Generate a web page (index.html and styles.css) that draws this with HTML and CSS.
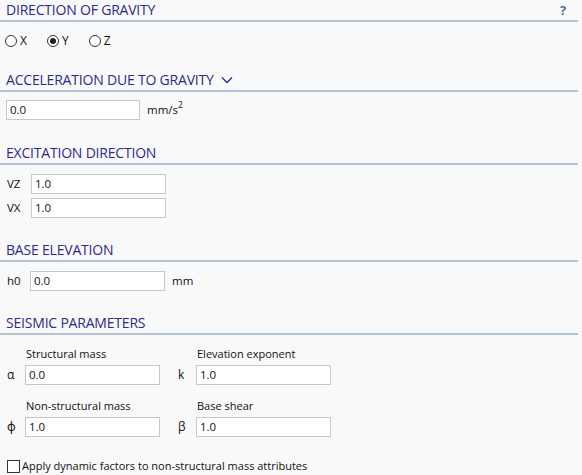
FILE: index.html
```html
<!DOCTYPE html>
<html>
<head>
<meta charset="utf-8">
<link rel="stylesheet" href="styles.css">
</head>
<body>
<div class="panel">
  <div class="heading">
    <span>DIRECTION OF GRAVITY</span>
    <span class="help">?</span>
  </div>
  <div class="radios">
    <label class="radio"><span class="circle"></span>X</label>
    <label class="radio"><span class="circle on"></span>Y</label>
    <label class="radio"><span class="circle"></span>Z</label>
  </div>

  <div class="heading h-accel">
    <span>ACCELERATION DUE TO GRAVITY</span>
    <svg class="chev" width="12" height="8" viewBox="0 0 12 8"><path d="M1 1.5 L6 6.5 L11 1.5" fill="none" stroke="#2e2a8e" stroke-width="1.4"/></svg>
  </div>
  <div class="row accel">
    <div class="input w134">0.0</div>
    <span class="unit">mm/s<sup>2</sup></span>
  </div>

  <div class="heading h-exc">
    <span>EXCITATION DIRECTION</span>
  </div>
  <div class="rows">
    <div class="row"><span class="lbl">VZ</span><div class="input w135">1.0</div></div>
    <div class="row"><span class="lbl">VX</span><div class="input w135">1.0</div></div>
  </div>

  <div class="heading h-base">
    <span>BASE ELEVATION</span>
  </div>
  <div class="rows">
    <div class="row"><span class="lbl h0">h0</span><div class="input w135">0.0</div><span class="unit mm">mm</span></div>
  </div>

  <div class="heading h-seis">
    <span>SEISMIC PARAMETERS</span>
  </div>
  <div class="grid">
    <div class="cell">
      <div class="cap">Structural mass</div>
      <div class="row"><span class="sym">α</span><div class="input w135">0.0</div></div>
    </div>
    <div class="cell">
      <div class="cap">Elevation exponent</div>
      <div class="row"><span class="sym">k</span><div class="input w135">1.0</div></div>
    </div>
    <div class="cell">
      <div class="cap">Non-structural mass</div>
      <div class="row"><span class="sym">ϕ</span><div class="input w135">1.0</div></div>
    </div>
    <div class="cell">
      <div class="cap">Base shear</div>
      <div class="row"><span class="sym">β</span><div class="input w135">1.0</div></div>
    </div>
  </div>

  <label class="check"><span class="box"></span>Apply dynamic factors to non-structural mass attributes</label>
</div>
</body>
</html>
```
FILE: styles.css
```css
html, body {
  margin: 0;
  padding: 0;
  background: #f9f9f9;
}
body {
  font-family: "Open Sans", "Noto Sans", sans-serif;
  font-size: 11px;
  line-height: 16px;
  color: #111;
  width: 582px;
  height: 475px;
  overflow: hidden;
}
.panel {
  width: 578px;
}
.heading {
  display: flex;
  align-items: center;
  height: 20px;
  padding-left: 6px;
  border-bottom: 2px solid #b6c4d8;
  color: #2d2a8c;
  font-size: 14px;
  line-height: 18px;
  letter-spacing: -0.2px;
}
.h-accel { margin-top: 21px; }
.h-exc { margin-top: 23px; }
.h-base { margin-top: 22px; }
.h-seis { margin-top: 22px; }
.help {
  margin-left: auto;
  margin-right: 12px;
  color: #4d6f9e;
  font-weight: bold;
  font-size: 13px;
}
.chev {
  margin-left: 7px;
}
.radios {
  display: flex;
  margin-top: 11px;
  height: 16px;
  align-items: center;
  padding-left: 5px;
  font-size: 12px;
}
.radio {
  display: flex;
  align-items: center;
  margin-right: 20px;
}
.circle {
  width: 10px;
  height: 10px;
  border: 1px solid #333;
  border-radius: 50%;
  margin-right: 3px;
  display: flex;
  align-items: center;
  justify-content: center;
  background: #fff;
}
.circle.on::after {
  content: "";
  width: 6px;
  height: 6px;
  border-radius: 50%;
  background: #222;
}
.row {
  display: flex;
  align-items: center;
}
.accel {
  margin-top: 8px;
  padding-left: 6px;
}
.input {
  box-sizing: border-box;
  height: 20px;
  border: 1px solid #c8c8c8;
  background: #fff;
  padding-left: 3px;
  line-height: 18px;
  font-size: 11.5px;
  color: #111;
}
.w134 { width: 134px; }
.w135 { width: 135px; }
.unit {
  margin-left: 7px;
  font-size: 11.5px;
}
.unit sup {
  font-size: 8.5px;
  vertical-align: 6px;
  line-height: 0;
}
.rows {
  display: flex;
  flex-direction: column;
  gap: 4px;
  margin-top: 9px;
  padding-left: 7px;
}
.lbl {
  width: 24px;
  font-size: 11.5px;
}
.lbl.h0 {
  width: 23px;
}
.grid {
  display: grid;
  grid-template-columns: 171px 160px;
  row-gap: 13px;
  margin-top: 11px;
  padding-left: 7px;
}
.cap {
  padding-left: 19px;
  height: 16px;
  margin-bottom: 3px;
}
.sym {
  width: 18px;
  font-size: 12px;
}
.check {
  display: flex;
  align-items: center;
  margin-top: 21px;
  padding-left: 7px;
  height: 16px;
}
.box {
  width: 11px;
  height: 11px;
  border: 1px solid #333;
  background: #fff;
  margin-right: 2px;
}
```
